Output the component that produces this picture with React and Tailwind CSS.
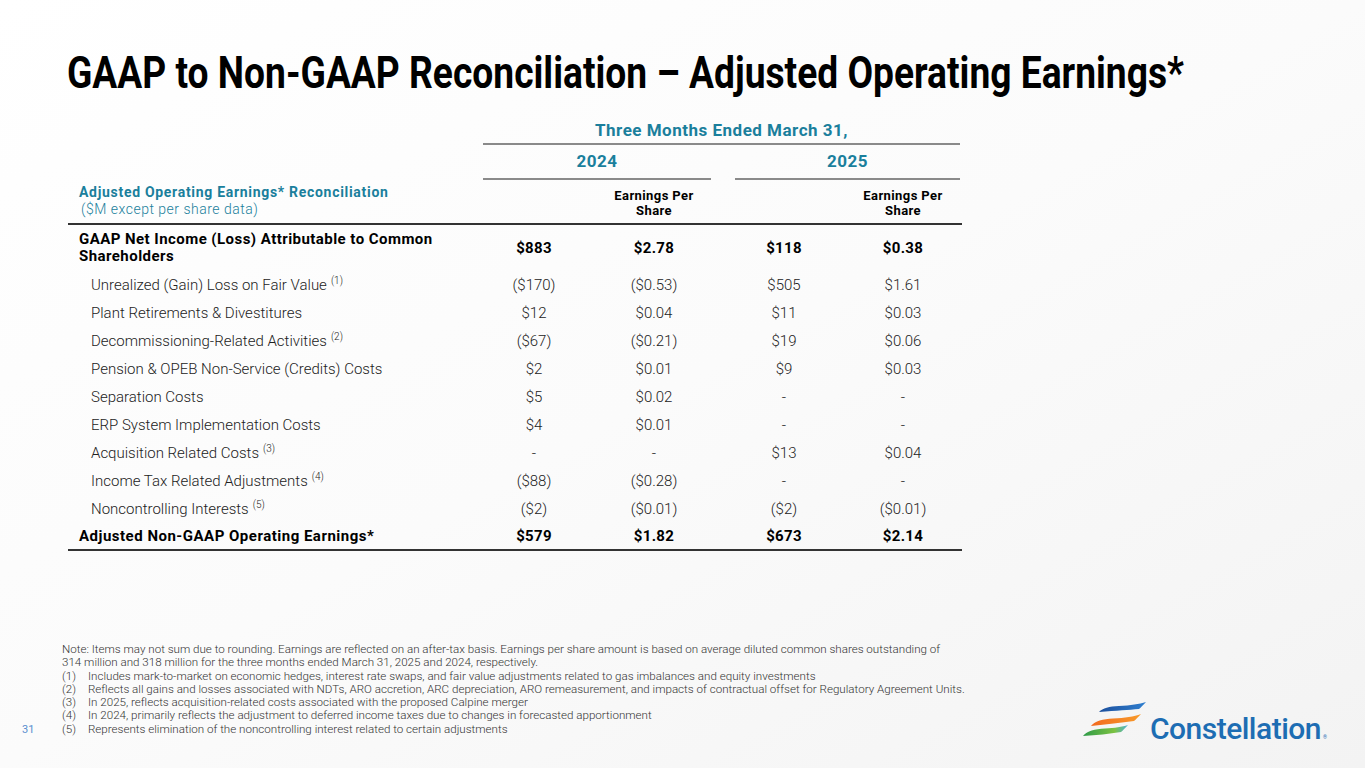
import React from "react";

const rows = [
  ["Unrealized (Gain) Loss on Fair Value", "(1)", "($170)", "($0.53)", "$505", "$1.61"],
  ["Plant Retirements & Divestitures", "", "$12", "$0.04", "$11", "$0.03"],
  ["Decommissioning-Related Activities", "(2)", "($67)", "($0.21)", "$19", "$0.06"],
  ["Pension & OPEB Non-Service (Credits) Costs", "", "$2", "$0.01", "$9", "$0.03"],
  ["Separation Costs", "", "$5", "$0.02", "-", "-"],
  ["ERP System Implementation Costs", "", "$4", "$0.01", "-", "-"],
  ["Acquisition Related Costs", "(3)", "-", "-", "$13", "$0.04"],
  ["Income Tax Related Adjustments", "(4)", "($88)", "($0.28)", "-", "-"],
  ["Noncontrolling Interests", "(5)", "($2)", "($0.01)", "($2)", "($0.01)"],
];

const notes = [
  ["(1)", "Includes mark-to-market on economic hedges, interest rate swaps, and fair value adjustments related to gas imbalances and equity investments"],
  ["(2)", "Reflects all gains and losses associated with NDTs, ARO accretion, ARC depreciation, ARO remeasurement, and impacts of contractual offset for Regulatory Agreement Units."],
  ["(3)", "In 2025, reflects acquisition-related costs associated with the proposed Calpine merger"],
  ["(4)", "In 2024, primarily reflects the adjustment to deferred income taxes due to changes in forecasted apportionment"],
  ["(5)", "Represents elimination of the noncontrolling interest related to certain adjustments"],
];

function Cells({ v, bold }) {
  const cls = bold ? "font-bold text-black tracking-[0.3px]" : "font-light text-[#222]";
  return (
    <>
      <div className={`w-[120px] text-center ${cls}`}>{v[0]}</div>
      <div className={`w-[120px] text-center ${cls}`}>{v[1]}</div>
      <div className="w-[10px]" />
      <div className={`w-[120px] text-center ${cls}`}>{v[2]}</div>
      <div className={`w-[118px] text-center ${cls}`}>{v[3]}</div>
    </>
  );
}

function Logo() {
  return (
    <div className="flex items-end gap-[3px]">
      <svg width="68" height="42" viewBox="0 0 68 42">
        <defs>
          <linearGradient id="gb" x1="0" x2="1" y1="0" y2="0">
            <stop offset="0" stopColor="#1c4f9c" />
            <stop offset="1" stopColor="#2f7fcf" />
          </linearGradient>
          <linearGradient id="go" x1="0" x2="1" y1="0" y2="0">
            <stop offset="0" stopColor="#f26a1f" />
            <stop offset="1" stopColor="#f79a2a" />
          </linearGradient>
          <linearGradient id="gg" x1="0" x2="1" y1="0" y2="0">
            <stop offset="0" stopColor="#2e9a48" />
            <stop offset="0.7" stopColor="#7cc242" />
            <stop offset="1" stopColor="#4fb2d8" />
          </linearGradient>
        </defs>
        <path d="M20 13 C24 9 30 7.5 40 7 C52 6.4 60 5 67 3 C64 6 62 8.5 60 10 C50 11 38 11.5 20 13 Z" fill="url(#gb)" />
        <path d="M12 27 C16 22 24 20 34 19.5 C46 19 55 17.5 62 15 C59 18 57 20.5 55 22 C42 24 28 25 12 27 Z" fill="url(#go)" />
        <path d="M4 37 C8 32 16 30 26 29.5 C36 29 43 28 49 26 C46 29 44 31.5 42 33 C30 35 18 36 4 37 Z" fill="url(#gg)" />
      </svg>
      <div className="flex items-end mb-[-3px]">
        <span className="font-['Roboto',sans-serif] font-medium text-[30px] leading-none text-[#1d6db3] tracking-[-0.5px]">Constellation</span>
        <span className="text-[5px] text-[#1d6db3] ml-[2px] mb-[3px]">®</span>
      </div>
    </div>
  );
}

export default function App() {
  return (
    <div className="w-[1365px] h-[768px] overflow-hidden relative bg-gradient-to-br from-[#ffffff] via-[#fbfbfb] to-[#f3f3f3] font-['Roboto',sans-serif]">
      <div className="flex flex-col h-full">
        <div className="ml-[67px] mt-[49px] h-[48px] whitespace-nowrap">
          <h1 className="inline-block origin-left scale-x-[0.845] text-[44px] leading-[48px] font-bold text-black font-['Roboto',sans-serif] tracking-[0px]">
            GAAP to Non-GAAP Reconciliation – Adjusted Operating Earnings*
          </h1>
        </div>

        <div className="ml-[68px] mt-[22px] w-[894px] flex flex-col">
          <div className="flex">
            <div className="w-[415px]" />
            <div className="w-[477px] flex flex-col">
              <div className="text-center text-[17px] font-bold text-[#1a7f9c] leading-[22px] h-[24px] tracking-[0.5px]">Three Months Ended March 31,</div>
              <div className="h-[2px] bg-[#8a8a8a]" />
              <div className="flex mt-[5px]">
                <div className="w-[228px] flex flex-col">
                  <div className="text-center text-[17px] font-bold text-[#1a7f9c] leading-[22px] h-[28px] tracking-[0.5px]">2024</div>
                  <div className="h-[2px] bg-[#8a8a8a]" />
                </div>
                <div className="w-[24px]" />
                <div className="w-[225px] flex flex-col">
                  <div className="text-center text-[17px] font-bold text-[#1a7f9c] leading-[22px] h-[28px] tracking-[0.5px]">2025</div>
                  <div className="h-[2px] bg-[#8a8a8a]" />
                </div>
              </div>
            </div>
          </div>

          <div className="flex items-end pt-[4px] pb-[5px]">
            <div className="w-[406px] pl-[11px]">
              <div className="text-[14px] font-bold text-[#1a7f9c] leading-[17px] tracking-[0.7px] whitespace-nowrap">Adjusted Operating Earnings* Reconciliation</div>
              <div className="text-[14px] font-light text-[#1a7f9c] leading-[17px] pl-[2px] tracking-[0.5px]">($M except per share data)</div>
            </div>
            <div className="w-[120px]" />
            <div className="w-[120px] text-center text-[13px] font-bold text-black leading-[15px] tracking-[0.4px]">Earnings Per<br />Share</div>
            <div className="w-[10px]" />
            <div className="w-[120px]" />
            <div className="w-[118px] text-center text-[13px] font-bold text-black leading-[15px] tracking-[0.4px]">Earnings Per<br />Share</div>
          </div>
          <div className="h-[2px] bg-[#333]" />

          <div className="flex items-center h-[46px] text-[15px]">
            <div className="w-[406px] pl-[11px] font-bold text-black leading-[17px] tracking-[0.45px] whitespace-nowrap">GAAP Net Income (Loss) Attributable to Common<br />Shareholders</div>
            <Cells v={["$883", "$2.78", "$118", "$0.38"]} bold />
          </div>

          {rows.map((r) => (
            <div key={r[0]} className="flex items-center h-[28px] text-[15px]">
              <div className="w-[406px] pl-[23px] font-light text-[#222] whitespace-nowrap">
                {r[0]}
                {r[1] && <span className="text-[10px] align-top relative top-[-1px] ml-[4px]">{r[1]}</span>}
              </div>
              <Cells v={r.slice(2)} />
            </div>
          ))}

          <div className="flex items-center h-[26px] text-[15px]">
            <div className="w-[406px] pl-[11px] font-bold text-black tracking-[0.5px]">Adjusted Non-GAAP Operating Earnings*</div>
            <Cells v={["$579", "$1.82", "$673", "$2.14"]} bold />
          </div>
          <div className="h-[2px] bg-[#333]" />
        </div>

        <div className="flex-1" />

        <div className="flex items-end justify-between pb-[25px]">
          <div className="flex items-end mb-[7px]">
            <div className="w-[62px] pl-[22px] text-[11px] text-[#5a8fcf] leading-[13.3px]">31</div>
            <div className="text-[11.6px] font-light text-[#333] leading-[13.3px] whitespace-nowrap">
              <div>Note: Items may not sum due to rounding. Earnings are reflected on an after-tax basis. Earnings per share amount is based on average diluted common shares outstanding of</div>
              <div>314 million and 318 million for the three months ended March 31, 2025 and 2024, respectively.</div>
              {notes.map((n) => (
                <div key={n[0]} className="flex">
                  <span className="w-[26px]">{n[0]}</span>
                  <span>{n[1]}</span>
                </div>
              ))}
            </div>
          </div>
          <div className="mr-[38px] mb-[2px]">
            <Logo />
          </div>
        </div>
      </div>
    </div>
  );
}
